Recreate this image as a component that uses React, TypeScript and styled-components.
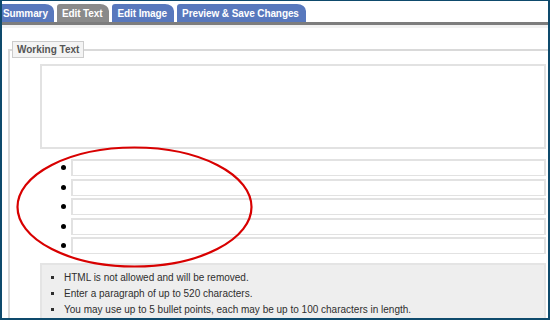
import styled, { createGlobalStyle } from "styled-components";

const GlobalStyle = createGlobalStyle`
  html, body {
    margin: 0;
    padding: 0;
    background: #ffffff;
  }
  body {
    font-family: "Liberation Sans", Arial, sans-serif;
  }
`;

const tabs = ["Summary", "Edit Text", "Edit Image", "Preview & Save Changes"];
const notes = [
  "HTML is not allowed and will be removed.",
  "Enter a paragraph of up to 520 characters.",
  "You may use up to 5 bullet points, each may be up to 100 characters in length.",
];

export default function App() {
  return (
    <>
      <GlobalStyle />
      <Frame>
        <TabBar>
          {tabs.map((t, i) => (
            <Tab key={t} $active={i === 1} $first={i === 0}>
              {t}
            </Tab>
          ))}
        </TabBar>
        <Strip />
        <Fieldset>
          <Legend>Working Text</Legend>
          <Body>
            <Paragraph />
            <Bullets>
              {[0, 1, 2, 3, 4].map((n) => (
                <BulletRow key={n}>
                  <Dot />
                  <Input />
                </BulletRow>
              ))}
            </Bullets>
            <Notes>
              {notes.map((n) => (
                <Note key={n}>{n}</Note>
              ))}
            </Notes>
          </Body>
        </Fieldset>
        <Circle viewBox="0 0 550 320" width="550" height="320">
          <ellipse
            cx="134.5"
            cy="207"
            rx="117"
            ry="59.5"
            fill="none"
            stroke="#d80000"
            strokeWidth="2.2"
          />
        </Circle>
      </Frame>
    </>
  );
}

const Frame = styled.div`
  position: relative;
  width: 550px;
  height: 320px;
  box-sizing: border-box;
  border: 2px solid #0e4a6c;
  border-top-width: 1px;
  overflow: hidden;
  background: #ffffff;
`;

const TabBar = styled.div`
  display: flex;
  align-items: flex-end;
  gap: 3px;
  padding-top: 3px;
  margin-left: -2px;
  border-bottom: 3px solid #7d7d7d;
`;

const Tab = styled.div<{ $active: boolean; $first: boolean }>`
  height: 18px;
  line-height: 19px;
  padding: 0 ${(p) => (p.$first ? "6px" : "7px")} 0
    ${(p) => (p.$first ? "3px" : "5px")};
  font-size: 10px;
  font-weight: bold;
  letter-spacing: -0.1px;
  color: #ffffff;
  background: ${(p) => (p.$active ? "#8a8a8a" : "#5878bd")};
  border-top-left-radius: ${(p) => (p.$first ? "0" : "3px")};
  border-top-right-radius: 9px 7px;
  white-space: nowrap;
`;

const Strip = styled.div`
  height: 3px;
  background: #f2f2f2;
`;

const Fieldset = styled.fieldset`
  margin: 13px 0 0 6px;
  padding: 0;
  border: 0;
  border-top: 2px solid #d9d9d9;
  border-left: 2px solid #d9d9d9;
  min-width: 0;
`;

const Legend = styled.legend`
  margin-left: 2px;
  padding: 0 4px;
  height: 15px;
  line-height: 15px;
  font-size: 10px;
  font-weight: bold;
  color: #555555;
  background: #f4f4f4;
  border: 1px solid #cccccc;
`;

const Body = styled.div`
  padding: 6px 2px 0 30px;
`;

const Paragraph = styled.div`
  height: 81px;
  border: 2px solid #e2e2e2;
  background: #ffffff;
`;

const Bullets = styled.div`
  margin-top: 10px;
  padding-left: 21px;
  display: flex;
  flex-direction: column;
  gap: 2.5px;
`;

const BulletRow = styled.div`
  display: flex;
  align-items: center;
  gap: 5px;
`;

const Dot = styled.span`
  width: 5px;
  height: 5px;
  border-radius: 50%;
  background: #000000;
  flex: none;
`;

const Input = styled.div`
  flex: 1;
  height: 14px;
  border: 2px solid #e2e2e2;
  border-bottom-width: 1px;
  background: #ffffff;
`;

const Notes = styled.ul`
  margin: 9px 0 0;
  padding: 5px 0 6px 22px;
  list-style: square;
  background: #eeeeee;
  border: 2px solid #e4e4e4;
  color: #2e2e2e;
  font-size: 10px;
`;

const Note = styled.li`
  line-height: 16px;
`;

const Circle = styled.svg`
  position: absolute;
  left: -2px;
  top: -1px;
  pointer-events: none;
`;
